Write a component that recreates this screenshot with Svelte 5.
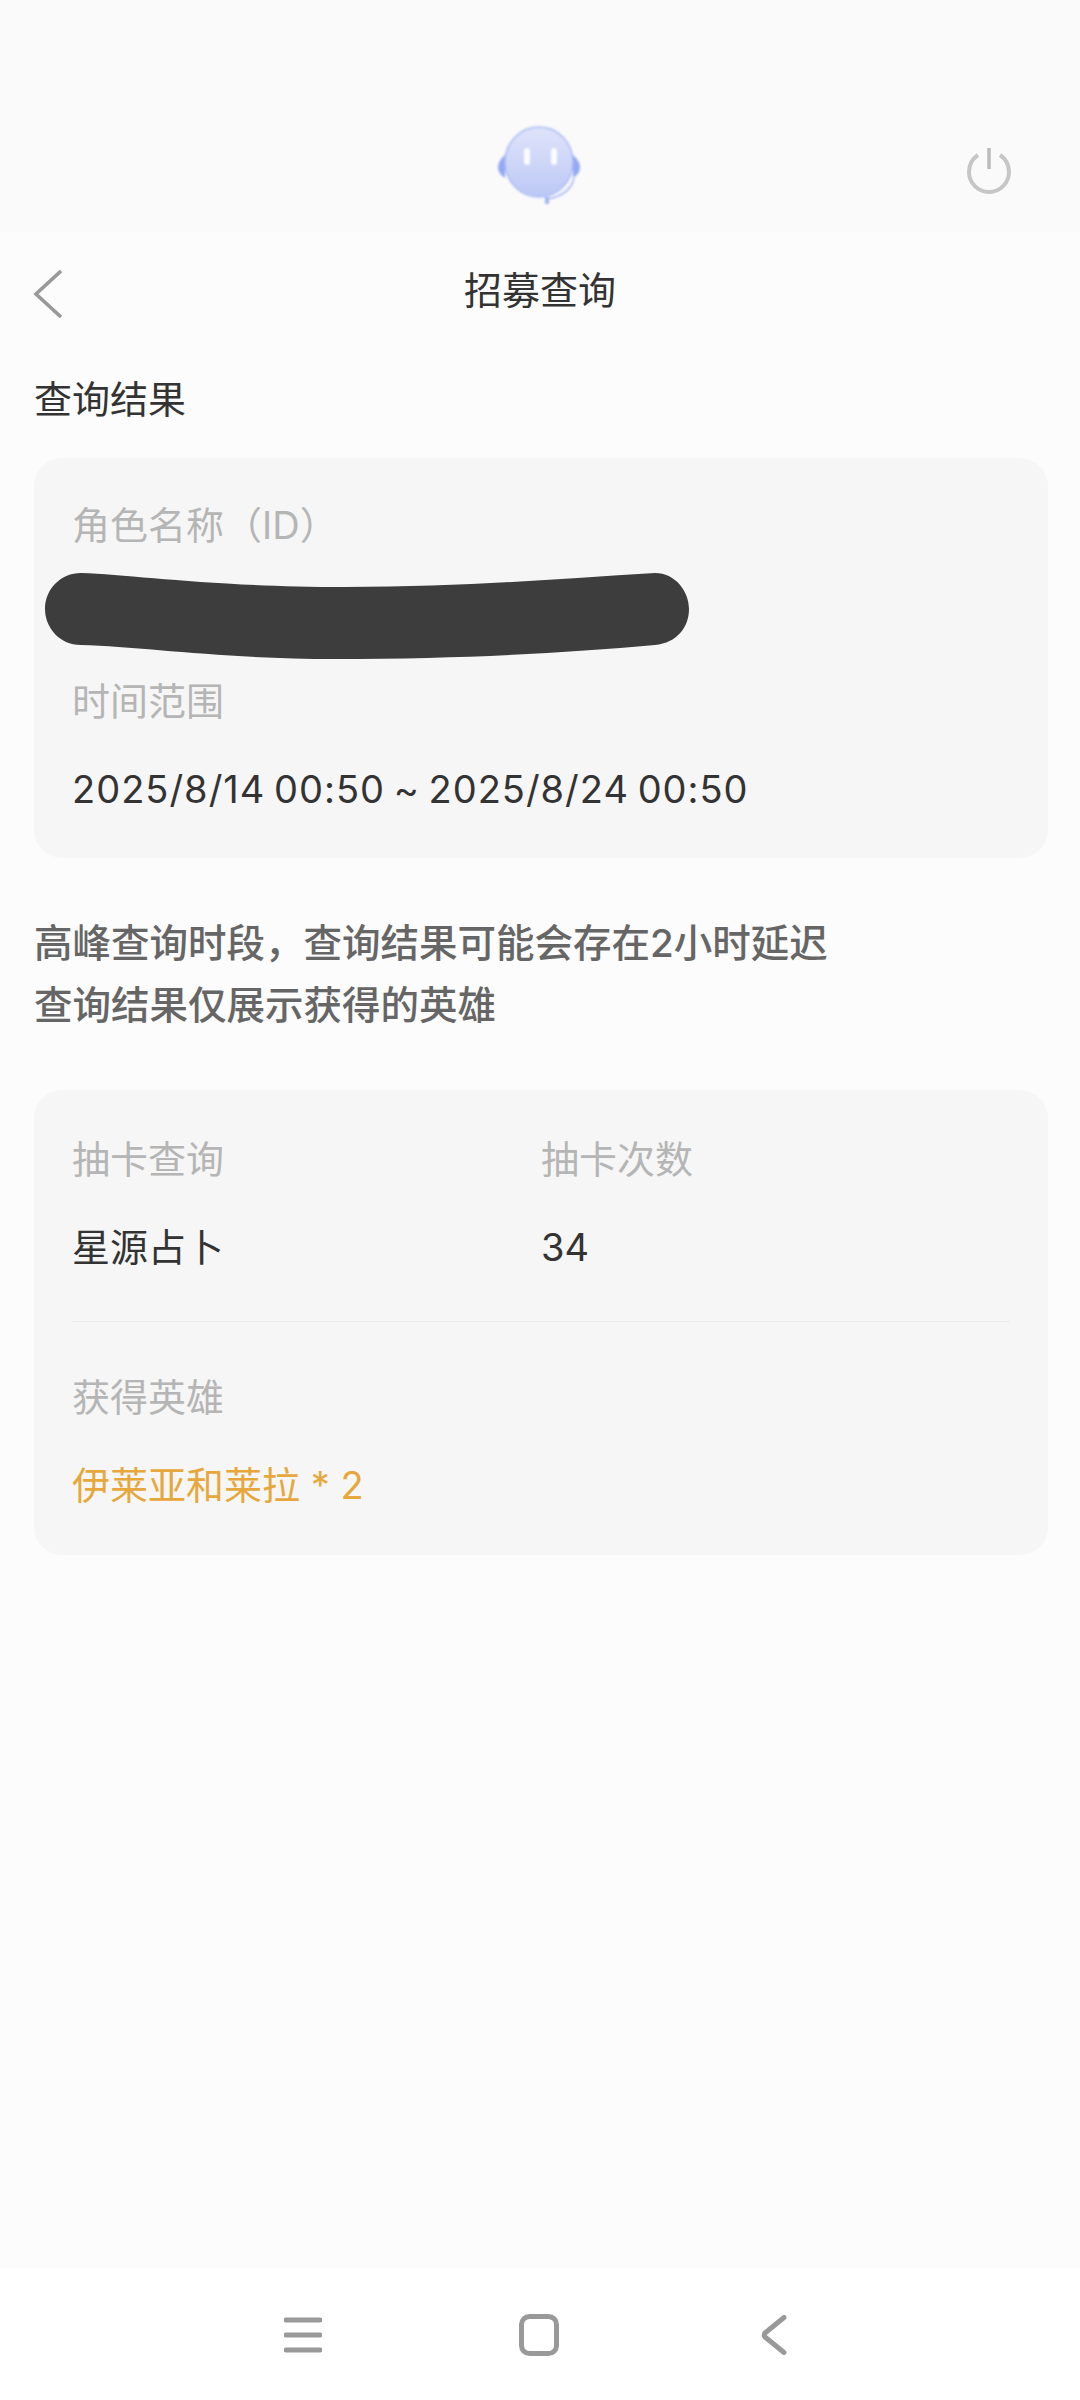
<script>
	const query = { type: '星源占卜', count: 34, hero: '伊莱亚和莱拉 * 2' };
	const range = '2025/8/14 00:50 ~ 2025/8/24 00:50';
</script>

<div class="page">
	<header class="topbar">
		<svg class="avatar" viewBox="0 0 84 78" aria-hidden="true">
			<defs>
				<linearGradient id="face" x1="0" y1="0" x2="0" y2="1">
					<stop offset="0" stop-color="#e0e4fb" />
					<stop offset="1" stop-color="#bcc8f5" />
				</linearGradient>
			</defs>
			<path d="M8 29 C3 33 1 38 1 41 C1 45 3 49 8 52 Z" fill="#94a9f3" />
			<path d="M76 29 C81 33 83 38 83 41 C83 45 81 49 76 52 Z" fill="#94a9f3" />
			<ellipse cx="42" cy="36" rx="34" ry="35" fill="url(#face)" stroke="#aabaf5" stroke-width="1.6" />
			<path d="M77 52 C74 66 62 71 50 73" fill="none" stroke="#a9b9f5" stroke-width="1.6" />
			<rect x="48" y="71" width="4" height="7" fill="#a3b5f5" />
			<rect x="27" y="22" width="6" height="17" rx="3" fill="#fbfcff" />
			<rect x="54" y="22" width="6" height="17" rx="3" fill="#fbfcff" />
		</svg>
		<svg class="power" viewBox="0 0 44 46" aria-hidden="true">
			<path d="M11 7 C5 11 2 17 2 24 C2 35 11 44 22 44 C33 44 42 35 42 24 C42 17 39 11 33 7" fill="none" stroke="#c6c6c6" stroke-width="4" />
			<path d="M22 0 V21" fill="none" stroke="#bdbdbd" stroke-width="3.6" />
		</svg>
	</header>

	<main class="content">
		<div class="nav-title">
			<svg class="back" viewBox="0 0 30 48" aria-hidden="true">
				<path d="M28 1 L3 24 L28 47" fill="none" stroke="#999" stroke-width="3.6" />
			</svg>
			<span>招募查询</span>
		</div>

		<h2 class="section">查询结果</h2>

		<section class="card first">
			<div class="label">角色名称（ID）</div>
			<svg class="scribble" viewBox="0 0 644 86" aria-hidden="true">
				<path d="M36 0 C90 2 170 14 300 14 C420 14 510 6 610 0 C630 0 644 18 644 36 C644 54 632 70 610 72 C520 80 420 86 290 86 C180 86 100 74 36 72 C14 72 0 54 0 36 C0 16 16 0 36 0 Z" fill="#3d3d3d" />
			</svg>
			<div class="label time">时间范围</div>
			<div class="value range">{range}</div>
		</section>

		<p class="notice">高峰查询时段，查询结果可能会存在2小时延迟<br />查询结果仅展示获得的英雄</p>

		<section class="card second">
			<div class="cols">
				<div>
					<div class="label">抽卡查询</div>
					<div class="value">{query.type}</div>
				</div>
				<div>
					<div class="label">抽卡次数</div>
					<div class="value">{query.count}</div>
				</div>
			</div>
			<div class="divider"></div>
			<div class="label">获得英雄</div>
			<div class="value hero">{query.hero}</div>
		</section>
	</main>

	<footer class="navbar">
		<svg class="nav-icon menu" viewBox="0 0 38 36" aria-hidden="true">
			<path d="M2 3 H36 M2 18 H36 M2 33 H36" fill="none" stroke="#999" stroke-width="5" stroke-linecap="round" />
		</svg>
		<svg class="nav-icon home" viewBox="0 0 40 42" aria-hidden="true">
			<rect x="2.5" y="2.5" width="35" height="37" rx="8" fill="none" stroke="#999" stroke-width="5" />
		</svg>
		<svg class="nav-icon prev" viewBox="0 0 26 40" aria-hidden="true">
			<path d="M23 2.5 L4 18 Q2.5 20 4 22 L23 37.5" fill="none" stroke="#999" stroke-width="5" stroke-linecap="round" />
		</svg>
	</footer>
</div>

<style>
	:global(body) {
		margin: 0;
		background: #fcfcfc;
	}

	.page {
		width: 1080px;
		height: 2400px;
		display: flex;
		flex-direction: column;
		font-family: Inter, 'Noto Sans CJK SC', sans-serif;
		font-size: 38px;
		color: #333;
	}

	.topbar {
		height: 232px;
		flex: none;
		box-sizing: border-box;
		background: #fafafa;
		position: relative;
	}

	.avatar {
		position: absolute;
		left: 497px;
		top: 126px;
		width: 84px;
		height: 78px;
		filter: blur(1.1px);
	}

	.power {
		position: absolute;
		left: 967px;
		top: 148px;
		width: 44px;
		height: 46px;
		filter: blur(0.5px);
	}

	.content {
		flex: 1;
		padding: 0 32px 0 34px;
		background: #fcfcfc;
	}

	.nav-title {
		height: 112px;
		display: flex;
		align-items: center;
		justify-content: center;
		position: relative;
		line-height: 1;
	}

	.nav-title span {
		margin-left: -2px;
		margin-top: 3px;
	}

	.back {
		position: absolute;
		left: -1px;
		top: 38px;
		width: 30px;
		height: 48px;
	}

	.section {
		margin: 30px 0 0;
		font-size: 38px;
		font-weight: 400;
		line-height: 50px;
	}

	.card {
		background: #f6f6f6;
		border-radius: 28px;
		padding: 0 38px;
	}

	.first {
		margin-top: 34px;
		height: 400px;
		padding-top: 42px;
		box-sizing: border-box;
	}

	.label {
		color: #b5b5b5;
		line-height: 50px;
	}

	.scribble {
		display: block;
		width: 644px;
		height: 86px;
		margin: 23px 0 0 -27px;
	}

	.time {
		margin-top: 17px;
	}

	.value {
		line-height: 50px;
		margin-top: 38px;
		color: #333;
	}

	.range {
		letter-spacing: 1px;
		word-spacing: -3px;
	}

	.notice {
		margin: 54px 0 0;
		color: #666;
		font-size: 38.5px;
		font-weight: 500;
		line-height: 62px;
	}

	.second {
		margin-top: 54px;
		height: 465px;
		box-sizing: border-box;
		padding-top: 44px;
	}

	.cols {
		display: grid;
		grid-template-columns: 469px 1fr;
	}

	.divider {
		height: 1px;
		background: #ececec;
		margin: 49px 0 50px;
	}

	.hero {
		color: #e6a83c;
	}

	.navbar {
		height: 132px;
		flex: none;
		background: #fff;
		position: relative;
	}

	.nav-icon {
		position: absolute;
	}

	.menu {
		left: 284px;
		top: 49px;
		width: 38px;
		height: 36px;
	}

	.home {
		left: 519px;
		top: 46px;
		width: 40px;
		height: 42px;
	}

	.prev {
		left: 761px;
		top: 47px;
		width: 26px;
		height: 40px;
	}
</style>
